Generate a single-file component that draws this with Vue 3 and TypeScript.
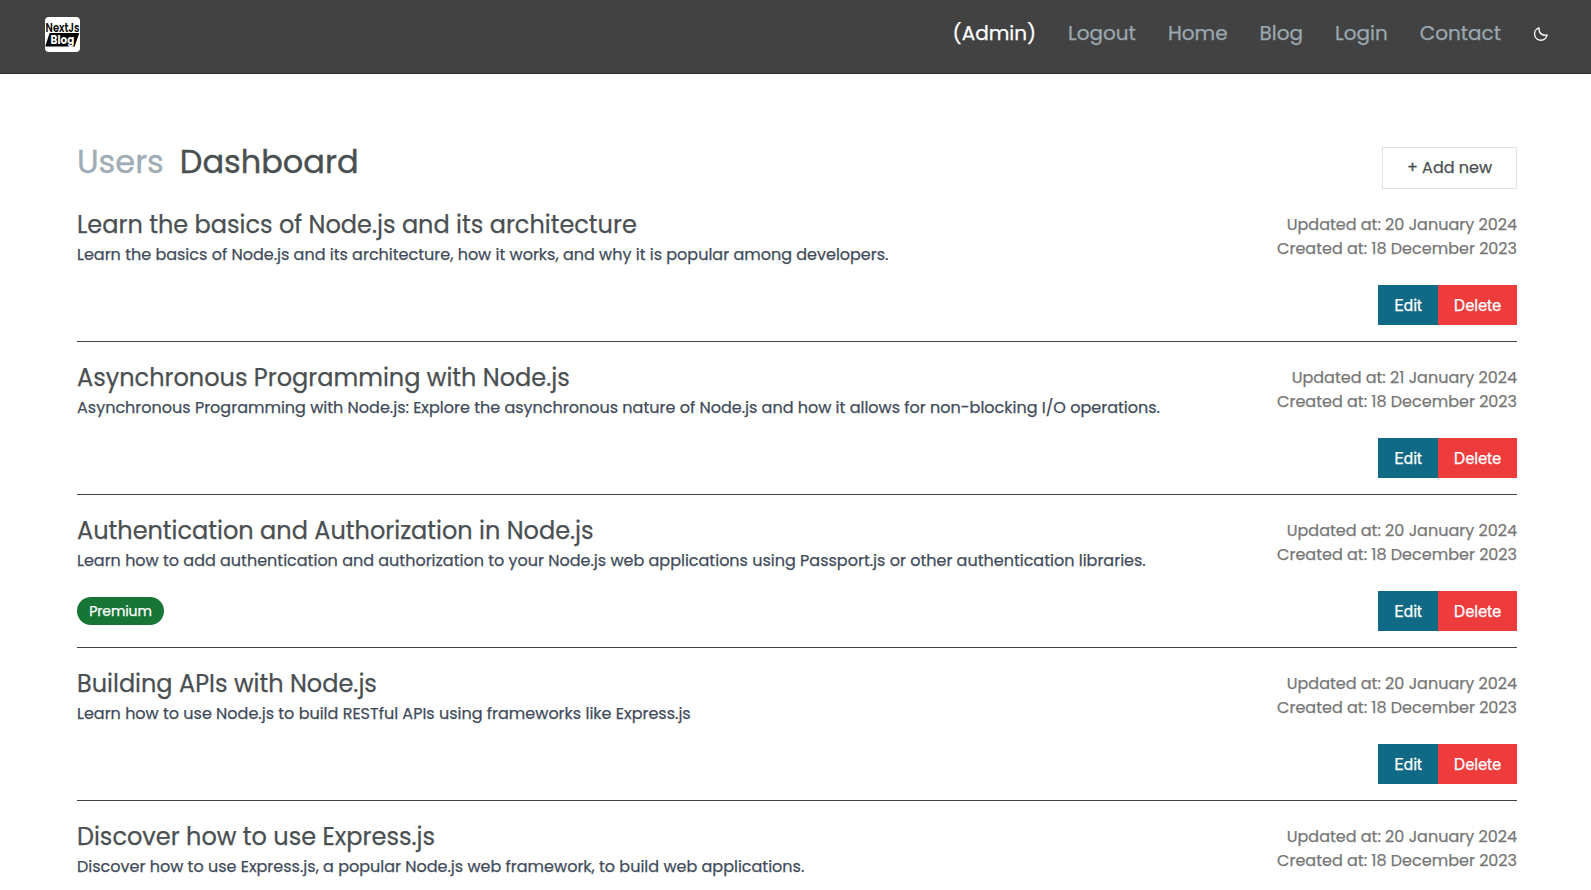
<script setup lang="ts">
interface NavLink {
  label: string
  key: string
}

interface Post {
  title: string
  description: string
  updatedAt: string
  createdAt: string
  premium?: boolean
  editable?: boolean
}

const links: NavLink[] = [
  { label: '(Admin)', key: 'admin' },
  { label: 'Logout', key: 'logout' },
  { label: 'Home', key: 'home' },
  { label: 'Blog', key: 'blog' },
  { label: 'Login', key: 'login' },
  { label: 'Contact', key: 'contact' },
]

const posts: Post[] = [
  {
    title: 'Learn the basics of Node.js and its architecture',
    description: 'Learn the basics of Node.js and its architecture, how it works, and why it is popular among developers.',
    updatedAt: '20 January 2024',
    createdAt: '18 December 2023',
    editable: true,
  },
  {
    title: 'Asynchronous Programming with Node.js',
    description: 'Asynchronous Programming with Node.js: Explore the asynchronous nature of Node.js and how it allows for non-blocking I/O operations.',
    updatedAt: '21 January 2024',
    createdAt: '18 December 2023',
    editable: true,
  },
  {
    title: 'Authentication and Authorization in Node.js',
    description: 'Learn how to add authentication and authorization to your Node.js web applications using Passport.js or other authentication libraries.',
    updatedAt: '20 January 2024',
    createdAt: '18 December 2023',
    premium: true,
    editable: true,
  },
  {
    title: 'Building APIs with Node.js',
    description: 'Learn how to use Node.js to build RESTful APIs using frameworks like Express.js',
    updatedAt: '20 January 2024',
    createdAt: '18 December 2023',
    editable: true,
  },
  {
    title: 'Discover how to use Express.js',
    description: 'Discover how to use Express.js, a popular Node.js web framework, to build web applications.',
    updatedAt: '20 January 2024',
    createdAt: '18 December 2023',
  },
]
</script>

<template>
  <div class="page">
    <header class="topbar">
      <svg class="logo" viewBox="0 0 35 35" role="img" aria-label="NextJs Blog">
        <rect width="35" height="35" rx="4" fill="#fff" />
        <text x="0.6" y="14.6" textLength="33.8" lengthAdjust="spacingAndGlyphs" class="logo-top">NextJs</text>
        <path d="M4.6 16H34.3L29.6 29.6H0.2Z" fill="#000" />
        <text x="5.6" y="27" textLength="23.6" lengthAdjust="spacingAndGlyphs" class="logo-bottom">Blog</text>
      </svg>
      <nav class="nav">
        <a v-for="link in links" :key="link.key" class="nav-link" :class="link.key">{{ link.label }}</a>
        <button class="theme" aria-label="Toggle theme">
          <svg viewBox="0 0 14 14" fill="none" stroke="#fff" stroke-width="1.4" stroke-linejoin="round">
            <path d="M5.1 0.9C4.3 5.5 7.9 9.2 13.1 7.9A6.3 6.3 0 1 1 5.1 0.9Z" />
          </svg>
        </button>
      </nav>
    </header>

    <main class="content">
      <div class="heading">
        <h1 class="tabs">
          <a class="users">Users</a>
          <span class="dashboard">Dashboard</span>
        </h1>
        <button class="add">+ Add new</button>
      </div>

      <article v-for="post in posts" :key="post.title" class="post">
        <div class="summary">
          <h2 class="title">{{ post.title }}</h2>
          <p class="description">{{ post.description }}</p>
          <span v-if="post.premium" class="badge">Premium</span>
        </div>
        <div class="side">
          <div>Updated at: {{ post.updatedAt }}</div>
          <div>Created at: {{ post.createdAt }}</div>
          <div v-if="post.editable" class="actions">
            <button class="edit">Edit</button>
            <button class="delete">Delete</button>
          </div>
        </div>
      </article>
    </main>
  </div>
</template>

<style>
html,
body {
  margin: 0;
  overflow: hidden;
  background: #fff;
}
</style>

<style scoped>
.page {
  height: 890px;
  overflow: hidden;
  font-family: Poppins, Inter, "Open Sans", sans-serif;
  font-size: 16px;
  line-height: 24px;
  color: #4a4f52;
  -webkit-text-stroke-width: 0.25px;
}

button {
  padding: 0;
  border: 0;
  background: none;
  font: inherit;
  color: inherit;
}

.topbar {
  box-sizing: border-box;
  height: 74px;
  padding: 17px 43px 0 45px;
  display: flex;
  justify-content: space-between;
  align-items: flex-start;
  background: #424242;
  border-bottom: 1px solid #2d2f35;
}

.logo {
  width: 35px;
  height: 35px;
  -webkit-text-stroke-width: 0;
}

.logo-top {
  font: 600 11.5px Poppins, Inter, sans-serif;
  fill: #000;
}

.logo-bottom {
  font: 700 12px Poppins, Inter, sans-serif;
  fill: #fff;
}

.nav {
  display: flex;
  align-items: center;
  gap: 32px;
  height: 32px;
}

.nav-link {
  font-size: 20px;
  line-height: 32px;
  color: #9ca8b0;
  white-space: nowrap;
}

.admin {
  color: #fff;
}

.theme {
  width: 14px;
  height: 14px;
  margin: 2px 0 0 1px;
  display: flex;
}

.theme svg {
  width: 14px;
  height: 14px;
}

.content {
  width: 1440px;
  margin-left: 77px;
}

.heading {
  height: 115px;
  display: flex;
  justify-content: space-between;
  align-items: flex-end;
}

.tabs {
  margin: 0 0 3px;
  display: flex;
  gap: 16px;
  font-size: 32px;
  font-weight: 400;
  line-height: 48px;
  -webkit-text-stroke-width: 0.4px;
}

.users {
  color: #a0adb6;
}

.add {
  box-sizing: border-box;
  width: 135px;
  height: 42px;
  border: 1px solid #dfe2e7;
}

.post {
  box-sizing: border-box;
  height: 153px;
  padding: 24px 0 16px;
  display: flex;
  justify-content: space-between;
  border-bottom: 1px solid #424242;
}

.summary {
  display: flex;
  flex-direction: column;
  align-items: flex-start;
}

.title {
  margin: 0;
  font-size: 24px;
  font-weight: 400;
  line-height: 24px;
  white-space: nowrap;
}

.description {
  margin: 6px 0 0;
  color: #414b5a;
  white-space: nowrap;
}

.badge {
  box-sizing: border-box;
  width: 87px;
  height: 28px;
  margin: auto 0 6px;
  border-radius: 14px;
  background: #177536;
  color: #fff;
  font-size: 14px;
  letter-spacing: -0.1px;
  line-height: 28px;
  text-align: center;
}

.side {
  color: #767676;
  text-align: right;
  white-space: nowrap;
}

.actions {
  margin-top: 24px;
  display: flex;
  justify-content: flex-end;
  color: #fff;
  font-family: Inter, sans-serif;
}

.edit,
.delete {
  height: 40px;
  letter-spacing: -0.2px;
}

.edit {
  width: 60px;
  background: #106985;
}

.delete {
  width: 79px;
  background: #ee3c3c;
}
</style>
